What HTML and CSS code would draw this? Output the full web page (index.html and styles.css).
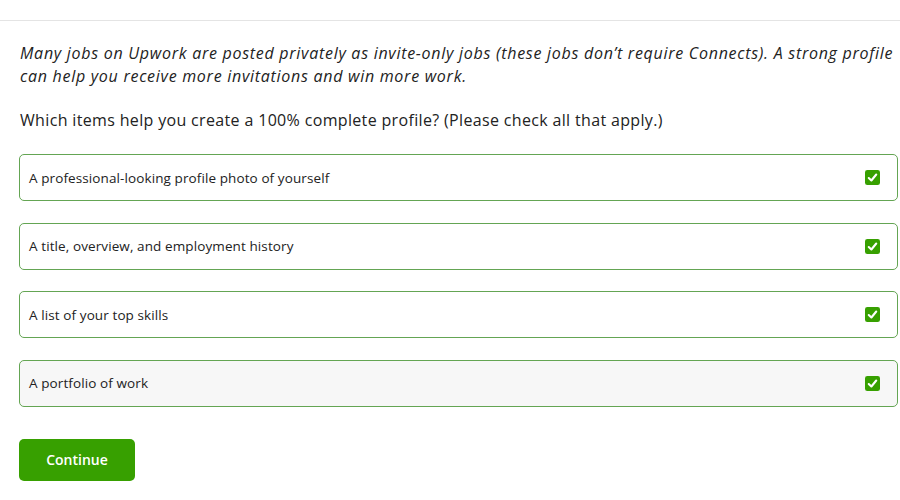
FILE: index.html
```html
<!DOCTYPE html>
<html>
<head>
<meta charset="utf-8">
<link rel="stylesheet" href="styles.css">
</head>
<body>
<div class="page">
  <div class="rule"></div>
  <p class="intro">Many jobs on Upwork are posted privately as invite-only jobs (these jobs don’t require Connects). A strong profile can help you receive more invitations and win more work.</p>
  <p class="question">Which items help you create a 100% complete profile? (Please check all that apply.)</p>
  <div class="options">
    <label class="option"><span class="label">A professional-looking profile photo of yourself</span><span class="check"><svg viewBox="0 0 16 16" width="15" height="15"><rect x="0" y="0" width="16" height="16" rx="2.5" fill="#37a000"/><path d="M4 8.5 L6.8 11.2 L12 4.8" fill="none" stroke="#fff" stroke-width="2.2" stroke-linecap="round" stroke-linejoin="round"/></svg></span></label>
    <label class="option"><span class="label">A title, overview, and employment history</span><span class="check"><svg viewBox="0 0 16 16" width="15" height="15"><rect x="0" y="0" width="16" height="16" rx="2.5" fill="#37a000"/><path d="M4 8.5 L6.8 11.2 L12 4.8" fill="none" stroke="#fff" stroke-width="2.2" stroke-linecap="round" stroke-linejoin="round"/></svg></span></label>
    <label class="option"><span class="label">A list of your top skills</span><span class="check"><svg viewBox="0 0 16 16" width="15" height="15"><rect x="0" y="0" width="16" height="16" rx="2.5" fill="#37a000"/><path d="M4 8.5 L6.8 11.2 L12 4.8" fill="none" stroke="#fff" stroke-width="2.2" stroke-linecap="round" stroke-linejoin="round"/></svg></span></label>
    <label class="option hover"><span class="label">A portfolio of work</span><span class="check"><svg viewBox="0 0 16 16" width="15" height="15"><rect x="0" y="0" width="16" height="16" rx="2.5" fill="#37a000"/><path d="M4 8.5 L6.8 11.2 L12 4.8" fill="none" stroke="#fff" stroke-width="2.2" stroke-linecap="round" stroke-linejoin="round"/></svg></span></label>
  </div>
  <button class="btn">Continue</button>
</div>
</body>
</html>
```
FILE: styles.css
```css
html, body { margin: 0; padding: 0; background: #fff; }
body { font-family: "Open Sans", "Liberation Sans", sans-serif; color: #222; }
.page { width: 900px; height: 500px; overflow: hidden; }
.rule { height: 0; border-top: 1px solid #e4e4e4; margin-top: 20px; }
.intro {
  margin: 21px 0 0 20px;
  font-style: italic;
  font-size: 16px;
  line-height: 23px;
  letter-spacing: 0.72px;
  color: #222;
  width: 890px;
}
.question {
  margin: 21px 0 0 20px;
  font-size: 16px;
  line-height: 23px;
  letter-spacing: 0.34px;
  color: #222;
}
.options {
  display: flex;
  flex-direction: column;
  gap: 21.67px;
  margin: 22px 2px 0 19px;
}
.option {
  display: flex;
  align-items: center;
  justify-content: space-between;
  height: 45px;
  border: 1px solid #64a553;
  border-radius: 5px;
  padding: 0 17px 0 9px;
  background: #fff;
  font-size: 13.5px;
  letter-spacing: 0.1px;
  color: #222;
}
.option.hover { background: #f7f7f7; }
.check { display: flex; }
.btn {
  display: block;
  margin: 32px 0 0 19px;
  width: 116px;
  height: 42px;
  background: #37a000;
  color: #fff;
  border: none;
  border-radius: 5px;
  font-family: "Open Sans", "Liberation Sans", sans-serif;
  font-weight: 600;
  font-size: 14px;
}
```
